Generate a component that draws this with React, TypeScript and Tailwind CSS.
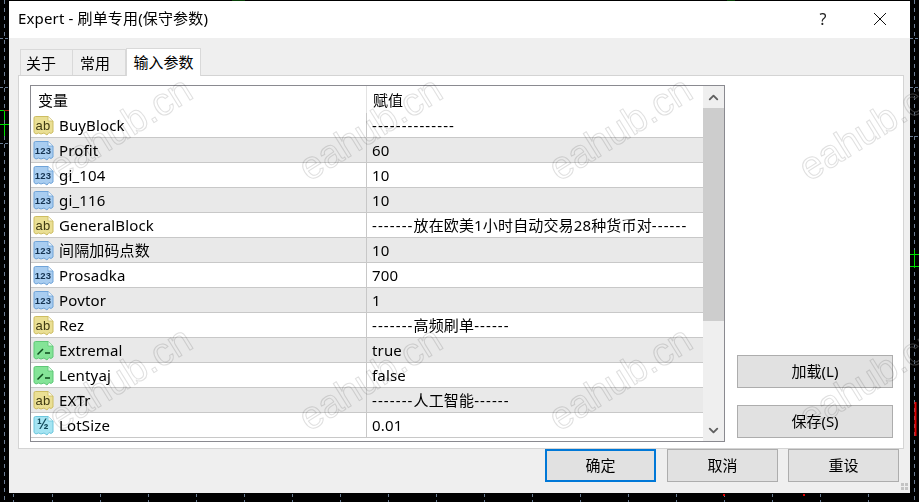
import { ChevronUp, ChevronDown } from "lucide-react";

type Kind = "ab" | "num" | "bool" | "dbl";

const rows: { kind: Kind; name: string; value: string }[] = [
  { kind: "ab", name: "BuyBlock", value: "--------------" },
  { kind: "num", name: "Profit", value: "60" },
  { kind: "num", name: "gi_104", value: "10" },
  { kind: "num", name: "gi_116", value: "10" },
  { kind: "ab", name: "GeneralBlock", value: "-------放在欧美1小时自动交易28种货币对------" },
  { kind: "num", name: "间隔加码点数", value: "10" },
  { kind: "num", name: "Prosadka", value: "700" },
  { kind: "num", name: "Povtor", value: "1" },
  { kind: "ab", name: "Rez", value: "-------高频刷单------" },
  { kind: "bool", name: "Extremal", value: "true" },
  { kind: "bool", name: "Lentyaj", value: "false" },
  { kind: "ab", name: "EXTr", value: "-------人工智能------" },
  { kind: "dbl", name: "LotSize", value: "0.01" },
];

const palette: Record<Kind, { fill: string; edge: string; ink: string }> = {
  ab: { fill: "#eadf94", edge: "#cdbd62", ink: "#3f3a12" },
  num: { fill: "#a9cdf0", edge: "#6fa3d8", ink: "#12304e" },
  bool: { fill: "#84e497", edge: "#5ec777", ink: "#0c4a1c" },
  dbl: { fill: "#a5e4f2", edge: "#6cc6dc", ink: "#124a5a" },
};

const labels: Record<Kind, string> = { ab: "ab", num: "123", bool: "", dbl: "½" };

function TypeIcon({ kind }: { kind: Kind }) {
  const c = palette[kind];
  return (
    <svg width="21" height="21" viewBox="0 0 21 21" className="shrink-0">
      <path
        d="M1 3 Q1 1.5 2.5 1.5 H15 L20 6 V17 L18 18.5 L16 17.5 L14 20 L11 18 L8 19 L5.5 18 L3 19 L1 17.5 Z"
        fill={c.fill}
        stroke={c.edge}
        strokeWidth="1"
      />
      <path d="M15 1.5 V6 H20" fill="#ffffff" fillOpacity="0.75" stroke={c.edge} strokeWidth="0.8" />
      {kind === "bool" ? (
        <path d="M4.5 14.5 L10 9 M12 13 H17" fill="none" stroke={c.ink} strokeWidth="1.5" />
      ) : (
        <text
          x="10"
          y={kind === "ab" ? 14.5 : 14}
          textAnchor="middle"
          fontSize={kind === "num" ? 9.5 : kind === "ab" ? 13 : 14}
          fontWeight={kind === "ab" ? 400 : 700}
          fill={c.ink}
          fontFamily="'Liberation Sans', sans-serif"
        >
          {labels[kind]}
        </text>
      )}
    </svg>
  );
}

// hyphens in the reference's UI font are about a pixel wider
function ValueText({ text }: { text: string }) {
  return (
    <>
      {text.split(/(-+)/).map((part, i) =>
        part.startsWith("-") ? (
          <span key={i} className="tracking-[1.1px]">
            {part}
          </span>
        ) : (
          <span key={i}>{part}</span>
        )
      )}
    </>
  );
}

function DialogButton({ label, primary, wide }: { label: string; primary?: boolean; wide?: boolean }) {
  return (
    <button
      className={`h-[33px] bg-[#e1e1e1] text-[15px] text-black ${wide ? "w-[156px]" : "w-[111px]"} ${
        primary ? "mr-px border-2 border-[#0078d7]" : "border border-[#adadad]"
      }`}
    >
      {label}
    </button>
  );
}

function ChartBackdrop() {
  const ticks = [13, 52, 100, 148, 196, 244, 292, 340, 388, 436, 484, 532, 580, 628, 676, 724, 772, 820, 868];
  return (
    <svg width="919" height="502" className="absolute inset-0">
      <line x1="4.5" y1="0" x2="4.5" y2="502" stroke="#6b7d94" strokeDasharray="4 4" />
      <line x1="914.5" y1="0" x2="914.5" y2="502" stroke="#6b7d94" strokeDasharray="4 4" />
      {ticks.map((x) => (
        <line key={x} x1={x + 0.5} y1="494" x2={x + 0.5} y2="502" stroke="#6b7d94" strokeDasharray="3 3" />
      ))}
      <path d="M0 38.5 H9 M0 87.5 H9 M0 143.5 H9 M910 38.5 H919 M910 87.5 H919 M910 136.5 H919" stroke="#6b7d94" strokeDasharray="3 2" />
      <path d="M0 110.5 H9 M4.5 110 V120 M0 124.5 H9 M4.5 124 V136" stroke="#00e000" />
      <path d="M4 110.5 H9" stroke="#a01818" />
      <path d="M910 254.5 H919 M914.5 250 V268 M910 266.5 H919" stroke="#00e000" />
      <path d="M915.5 402 V436" stroke="#e00000" strokeWidth="2" />
      <path d="M724 494 V496 M804 494 V496" stroke="#e00000" strokeWidth="2" />
      <path d="M232 0 H245 M727 0 H735" stroke="#0a7a0a" />
    </svg>
  );
}

const marks = [
  [120, 128],
  [370, 128],
  [620, 128],
  [870, 128],
  [120, 378],
  [370, 378],
  [620, 378],
  [870, 378],
];

function Watermarks({ dark }: { dark?: boolean }) {
  return (
    <div className={`absolute inset-0 pointer-events-none overflow-hidden ${dark ? "" : "mix-blend-multiply"}`}>
      {marks.map(([x, y]) => (
        <span
          key={`${x}-${y}`}
          className={`absolute -translate-x-1/2 -translate-y-1/2 -rotate-[32deg] whitespace-nowrap text-[39px] leading-none text-transparent font-['Liberation_Sans',sans-serif] ${
            dark ? "[-webkit-text-stroke:1px_#404040]" : "[-webkit-text-stroke:1px_#e0e0e0]"
          }`}
          style={{ left: x, top: y }}
        >
          eahub.cn
        </span>
      ))}
    </div>
  );
}

export default function App() {
  return (
    <div className="relative w-[919px] h-[502px] overflow-hidden bg-black pl-[9px] pt-px text-black font-['Noto_Sans','Noto_Sans_CJK_SC',sans-serif]">
      <ChartBackdrop />
      <Watermarks dark />
      <div className="relative flex h-[492px] w-[901px] flex-col bg-[#efefef]">
        <div className="flex h-[37px] shrink-0 items-center bg-white pb-[2px] pl-[9px] text-[15px]">
          <span className="flex-1 tracking-[0.15px]">Expert - 刷单专用(保守参数)</span>
          <span className="w-[14px] text-center text-[16px] text-[#222]">?</span>
          <svg width="14" height="14" viewBox="0 0 14 14" className="ml-[43px] mr-[23px]">
            <path d="M1 1 L13 13 M13 1 L1 13" stroke="#111" strokeWidth="1" />
          </svg>
        </div>

        <div className="flex h-[37px] shrink-0 items-end pl-[11px] text-[15px]">
          <div className="flex h-[26px] w-[53px] items-center border border-b-0 border-[#d9d9d9] pl-[5px] pt-px">关于</div>
          <div className="flex h-[26px] w-[53px] items-center border border-b-0 border-l-0 border-[#d9d9d9] pl-[7px] pt-px">常用</div>
          <div className="relative z-10 -mb-px flex h-[28px] w-[75px] items-center justify-center border border-b-0 border-[#d9d9d9] bg-white">输入参数</div>
        </div>

        <div className="ml-[9px] flex h-[374px] w-[886px] shrink-0 border border-[#d4d4d4] bg-white pl-[11px] pt-[9px]">
          <div className="flex h-[357px] w-[695px] shrink-0 border border-[#8a8a90]">
            <div className="flex h-full w-[672px] flex-col overflow-hidden">
              <div className="flex h-[27px] shrink-0 items-center text-[15px]">
                <span className="w-[335px] pl-[7px] pt-[2px]">变量</span>
                <span className="flex h-full items-center border-l border-[#e3e3e3] pl-[6px] pt-[2px]">赋值</span>
              </div>
              {rows.map((row, i) => (
                <div
                  key={row.name}
                  className={`flex h-[25px] shrink-0 items-center border-b border-[#c8c8c8] text-[15px] tracking-[0.15px] ${
                    i % 2 === 1 ? "bg-[#e9e9e9]" : "bg-white"
                  }`}
                >
                  <div className="flex h-full w-[335px] shrink-0 items-center gap-[5px] pl-[2px]">
                    <TypeIcon kind={row.kind} />
                    <span>{row.name}</span>
                  </div>
                  <div className="flex h-full flex-1 items-center whitespace-nowrap border-l border-[#c8c8c8] pl-[5px]">
                    <ValueText text={row.value} />
                  </div>
                </div>
              ))}
            </div>
            <div className="flex h-full w-[21px] flex-col bg-[#efefef]">
              <div className="flex h-[22px] items-center justify-center">
                <ChevronUp size={15} strokeWidth={3} className="text-[#606060]" />
              </div>
              <div className="h-[213px] bg-[#cdcdcd]" />
              <div className="flex-1" />
              <div className="flex h-[22px] items-center justify-center">
                <ChevronDown size={15} strokeWidth={3} className="text-[#606060]" />
              </div>
            </div>
          </div>
          <div className="ml-[12px] flex h-[353px] flex-col justify-end gap-[17px]">
            <DialogButton label="加载(L)" wide />
            <DialogButton label="保存(S)" wide />
          </div>
        </div>

        <div className="flex h-[33px] shrink-0 justify-end gap-[10px] pr-[11px]">
          <DialogButton label="确定" primary />
          <DialogButton label="取消" />
          <DialogButton label="重设" />
        </div>

        <svg width="8" height="8" viewBox="0 0 8 8" className="absolute bottom-[2px] right-[1px]">
          <path d="M0 0 H3 V3 H0 Z M4 0 H7 V3 H4 Z M0 4 H3 V7 H0 Z M4 4 H7 V7 H4 Z" fill="#c4c4c4" />
        </svg>
      </div>
      <Watermarks />
    </div>
  );
}
